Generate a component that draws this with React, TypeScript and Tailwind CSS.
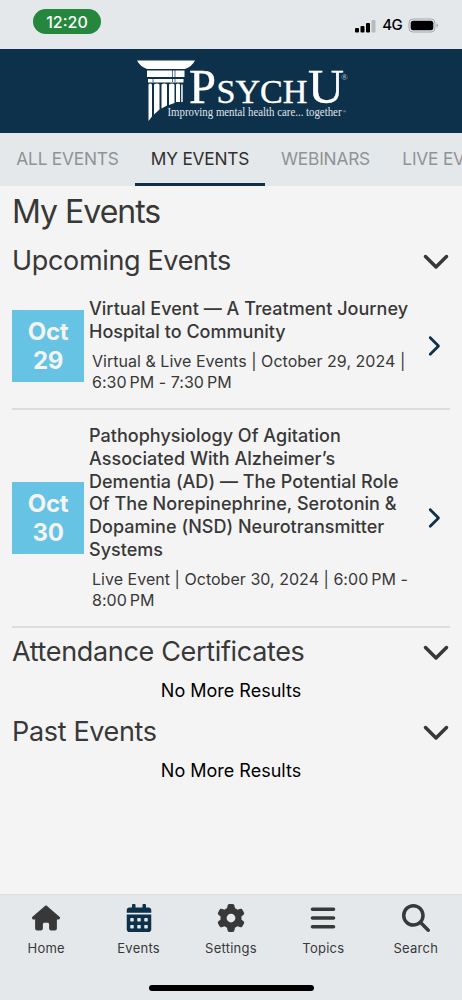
import {FaCalendarAlt} from "react-icons/fa"
import {FaBars, FaChevronDown, FaChevronRight, FaGear, FaHouse, FaMagnifyingGlass} from "react-icons/fa6"

export default function App() {
  return (
    <main className="flex h-[1000px] w-[462px] flex-col overflow-hidden bg-[#f4f4f4] font-['Inter',sans-serif] text-[#383838]">
      <StatusBar/>
      <header className="flex h-[84px] shrink-0 items-start justify-center bg-[#0d304b]">
        <Logo/>
      </header>
      <nav className="flex h-[53px] shrink-0 bg-[#e4e8eb]">
        {tabs.map((tab) => (
          <div
            key={tab.label}
            className={`flex shrink-0 justify-center border-b-[3px] pt-[13px] text-[17.300px] leading-[26px] whitespace-nowrap ${tab.width} ${
              tab.active ? "border-[#0d304b] text-[#303030]" : "border-transparent text-[#909294]"
            }`}
          >
            <span className="tracking-[-0.2px]">{tab.label}</span>
          </div>
        ))}
      </nav>

      <section className="flex-1 px-3">
        <h1 className="h-[51px] pt-[6px] text-[32px] leading-[40px] tracking-[-1px]">My Events</h1>
        <SectionTitle title="Upcoming Events"/>
        {events.map((event) => (
          <article
            key={event.day}
            className={`flex items-center border-b-2 border-[#dcdcdc] ${event.height}`}
          >
            <div className="flex h-[72px] w-[72px] shrink-0 flex-col items-center justify-center bg-[#66c3e3] text-[24px] leading-[29px] font-bold tracking-[-0.3px] text-[#f4f4f4]">
              <span>Oct</span>
              <span>{event.day}</span>
            </div>
            <div className="w-[326px] shrink-0 pb-px pl-[5px] whitespace-nowrap">
              <h3 className="text-[18px] leading-[22.7px] font-medium tracking-[0.03px]">
                {event.title.map((line) => <span key={line} className="block">{line}</span>)}
              </h3>
              <p className="pt-[8px] pl-[3px] text-[16px] leading-[20.3px] tracking-[0.03px]">
                {event.meta.map((line) => <span key={line} className="block">{line}</span>)}
              </p>
            </div>
            <FaChevronRight className="ml-[12px] size-[22px] text-[#0d304b]"/>
          </article>
        ))}
        <SectionTitle title="Attendance Certificates"/>
        <Empty/>
        <SectionTitle title="Past Events"/>
        <Empty/>
      </section>

      <footer className="h-[106px] shrink-0 border-t border-[#dcdfe1] bg-[#e4e8eb]">
        <div className="grid h-[90px] grid-cols-5">
          {navItems.map(({label, icon: Icon, color}) => (
            <div key={label} className="flex flex-col items-center pt-[9px]">
              <Icon className={`size-7 ${color}`}/>
              <span className="mt-[6px] text-[13px] leading-[20px] tracking-[0.25px]">{label}</span>
            </div>
          ))}
        </div>
        <div className="mx-auto h-[6px] w-[165px] rounded-full bg-black"/>
      </footer>
    </main>
  )
}

function StatusBar() {
  return (
    <div className="flex h-[49px] shrink-0 justify-between bg-[#e4e8eb] pr-[23px] pl-[33px]">
      <div className="mt-[9px] flex h-[25px] w-[68px] items-center justify-center rounded-full bg-[#24873d] text-[16px] font-medium text-white">
        12:20
      </div>
      <div className="mt-[17px] flex h-[17px] items-center gap-[6px]">
        <svg className="h-[14px] w-[21px]" viewBox="0 0 21 14">
          <rect x="0" y="9" width="4" height="4.5" rx="1"/>
          <rect x="5.5" y="7" width="4" height="6.5" rx="1"/>
          <rect x="11" y="4" width="4" height="9.5" rx="1"/>
          <rect x="16.5" y="1" width="4" height="12.500" rx="1" fill="#b8bbbd"/>
        </svg>
        <span className="text-[15px] font-medium tracking-[-0.6px] text-black">4G</span>
        <svg className="h-[15px] w-[31px]" viewBox="0 0 31 15">
          <rect x="1" y="1" width="26" height="13" rx="4" fill="none" stroke="#a5a8aa"/>
          <rect x="2.7" y="2.7" width="22.6" height="9.6" rx="2.5"/>
          <path d="M28.5 5.5q3 2 0 4z" fill="#a5a8aa"/>
        </svg>
      </div>
    </div>
  )
}

function Logo() {
  return (
    <svg className="ml-[18px] h-[84px] w-[240px]" viewBox="0 0 240 84" fill="#fff">
      {/* column capital */}
      <path d="M17 11.500H75Q72 17.500 65 20H27Q20 17.500 17 11.500Z"/>
      <path d="M27 21.500H64.500V28H27ZM28 30H63.500V33.500H28Z"/>
      <path d="M52.500 21V33M55 21V33M33 30V33.500" stroke="#0d304b" strokeWidth=".7"/>
      {/* fluted shaft, cut on a curve */}
      <path d="M28.500 35.500q2-2 3.500 0V67.500l-3.500 4.500ZM34 35.500q3-2 5.500 0V60.500L34 65.500ZM41.500 35.500q3-2 5.500 0V56.500L41.500 59.500ZM49 35.500q3-2 5.500 0V54L49 56ZM56 35.500q2-2 4 0V53H56ZM61.200 35.500h1.500V53h-1.500Z"/>
      <g fontFamily="Liberation Serif, serif">
        <g stroke="#fff" strokeWidth=".4">
          <text x="69" y="54" fontSize="48" textLength="27" lengthAdjust="spacingAndGlyphs">P</text>
          <text x="96.500" y="54" fontSize="34.500" textLength="91" lengthAdjust="spacingAndGlyphs">SYCH</text>
          <text x="188" y="54" fontSize="48" textLength="36" lengthAdjust="spacingAndGlyphs">U</text>
        </g>
        <text x="221" y="31" fontSize="9" fill="#c3cdd5">®</text>
        <text x="47.500" y="66.500" fontSize="11.500" fill="#e0e6ea" textLength="174" lengthAdjust="spacingAndGlyphs">Improving mental health care... together</text>
        <text x="222.500" y="64" fontSize="5" fill="#c3cdd5">®</text>
      </g>
    </svg>
  )
}

function SectionTitle({title}: {title: string}) {
  return (
    <div className="flex h-[46px] items-center justify-between">
      <h2 className="pt-[2px] text-[27px] leading-[34px] tracking-[-0.34px]">{title}</h2>
      <FaChevronDown className="size-[28px]"/>
    </div>
  )
}

function Empty() {
  return <p className="h-[34px] text-center text-[18px] leading-[34px] text-black">No More Results</p>
}

const tabs = [
  {label: "ALL EVENTS", width: "w-[135px]"},
  {label: "MY EVENTS", width: "w-[130px]", active: true},
  {label: "WEBINARS", width: "w-[121px]"},
  {label: "LIVE EVENTS", width: "w-[140px]"}
]

const events = [
  {
    day: "29",
    height: "h-[127px]",
    title: ["Virtual Event — A Treatment Journey", "Hospital to Community"],
    meta: ["Virtual & Live Events | October 29, 2024 |", "6:30\u2009PM - 7:30\u2009PM"]
  },
  {
    day: "30",
    height: "h-[218px]",
    title: [
      "Pathophysiology Of Agitation",
      "Associated With Alzheimer’s",
      "Dementia (AD) — The Potential Role",
      "Of The Norepinephrine, Serotonin &",
      "Dopamine (NSD) Neurotransmitter",
      "Systems"
    ],
    meta: ["Live Event | October 30, 2024 | 6:00\u2009PM -", "8:00\u2009PM"]
  }
]

const navItems = [
  {label: "Home", icon: FaHouse, color: "text-[#383838]"},
  {label: "Events", icon: FaCalendarAlt, color: "text-[#0d304b]"},
  {label: "Settings", icon: FaGear, color: "text-[#383838]"},
  {label: "Topics", icon: FaBars, color: "text-[#383838]"},
  {label: "Search", icon: FaMagnifyingGlass, color: "text-[#383838]"}
]
